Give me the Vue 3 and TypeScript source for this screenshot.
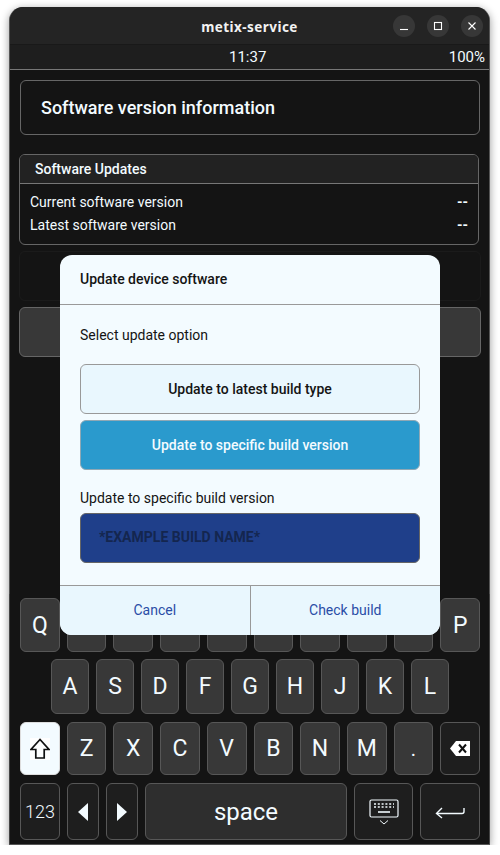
<script setup lang="ts">
const rowOne: string[] = ['Q', 'W', 'E', 'R', 'T', 'Y', 'U', 'I', 'O', 'P']
const rowTwo: string[] = ['A', 'S', 'D', 'F', 'G', 'H', 'J', 'K', 'L']
const rowThree: string[] = ['Z', 'X', 'C', 'V', 'B', 'N', 'M', '.']
</script>

<template>
  <div class="window">
    <header class="titlebar">
      <span class="title">metix-service</span>
      <div class="controls">
        <button class="ctl" aria-label="Minimise">
          <svg width="10" height="10" viewBox="0 0 10 10"><path d="M1 8.5h8" stroke="#fff" stroke-width="1.1" fill="none" /></svg>
        </button>
        <button class="ctl" aria-label="Maximise">
          <svg width="10" height="10" viewBox="0 0 10 10"><rect x="1.5" y="1.5" width="7" height="7" stroke="#fff" stroke-width="1.1" fill="none" /></svg>
        </button>
        <button class="ctl" aria-label="Close">
          <svg width="10" height="10" viewBox="0 0 10 10"><path d="M1.5 1.5l7 7M8.5 1.5l-7 7" stroke="#fff" stroke-width="1.1" fill="none" /></svg>
        </button>
      </div>
    </header>

    <div class="screen">
      <div class="status">
        <span class="time">11:37</span>
        <span class="battery">100%</span>
      </div>

      <main class="content">
        <section class="head-card">Software version information</section>
        <section class="update-card">
          <h2 class="update-title">Software Updates</h2>
          <div class="update-body">
            <div class="line"><span>Current software version</span><b>--</b></div>
            <div class="line"><span>Latest software version</span><b>--</b></div>
          </div>
        </section>
        <div class="ghost-card"></div>
        <div class="dark-button"></div>
      </main>

      <div class="keyboard">
        <div class="kb-row">
          <span v-for="k in rowOne" :key="k" class="key wide">{{ k }}</span>
        </div>
        <div class="kb-row centered">
          <span v-for="k in rowTwo" :key="k" class="key mid">{{ k }}</span>
        </div>
        <div class="kb-row third">
          <span class="key wide shift">
            <svg width="20" height="22" viewBox="0 0 20 22">
              <rect width="20" height="22" fill="#fff" />
              <path d="M10 1.5L1 11.5h4.8V20h8.4v-8.5H19z" fill="#fff" stroke="#111" stroke-width="1.7" stroke-linejoin="miter" />
            </svg>
          </span>
          <span v-for="k in rowThree" :key="k" class="key wide" :class="{ dot: k === '.' }">{{ k }}</span>
          <span class="key wide fn">
            <svg width="20" height="15" viewBox="0 0 20 15">
              <path d="M0 7.5L6 0h14v15H6z" fill="#fff" />
              <path d="M9 3.5l7 8M16 3.5l-7 8" stroke="#111" stroke-width="2" fill="none" />
            </svg>
          </span>
        </div>
        <div class="kb-row bottom">
          <span class="key fn num">123</span>
          <span class="key fn arrow">
            <svg width="10" height="18" viewBox="0 0 10 18"><path d="M10 0v18L0 9z" fill="#f3fbff" /></svg>
          </span>
          <span class="key fn arrow">
            <svg width="10" height="18" viewBox="0 0 10 18"><path d="M0 0v18l10-9z" fill="#f3fbff" /></svg>
          </span>
          <span class="key space">space</span>
          <span class="key fn hide">
            <svg width="30" height="26" viewBox="0 0 30 26" fill="none" stroke="#f3fbff">
              <rect x="1" y="1" width="28" height="17" rx="1.5" stroke-width="1.2" />
              <path d="M5 5h20M5 8h20" stroke-width="1.6" stroke-dasharray="2 1.8" />
              <path d="M9 13h12" stroke-width="1.6" />
              <path d="M11 21.5l4 3.5 4-3.5" stroke-width="1" />
            </svg>
          </span>
          <span class="key fn enter">
            <svg width="30" height="14" viewBox="0 0 30 14" fill="none" stroke="#f3fbff" stroke-width="1.4">
              <path d="M29 3v3.5a2 2 0 0 1-2 2H2" />
              <path d="M7 3L1.5 8.5 7 13" />
            </svg>
          </span>
        </div>
      </div>

      <div class="overlay">
        <section class="modal">
          <h3 class="modal-title">Update device software</h3>
          <div class="modal-body">
            <p class="select-label">Select update option</p>
            <div class="option">Update to latest build type</div>
            <div class="option active">Update to specific build version</div>
            <label class="field-label">Update to specific build version</label>
            <div class="field">*EXAMPLE BUILD NAME*</div>
          </div>
          <footer class="modal-footer">
            <button class="foot-btn">Cancel</button>
            <button class="foot-btn">Check build</button>
          </footer>
        </section>
      </div>
    </div>
  </div>
</template>

<style>
html, body { background: #fff; }
</style>

<style scoped>
* { box-sizing: border-box; }
.window {
  width: 481px;
  height: 838px;
  margin: 7px 0 0 9px;
  display: flex;
  flex-direction: column;
  background: #141414;
  border: 1px solid #555;
  border-top: 0;
  border-radius: 14px 14px 0 0;
  box-shadow: 0 2px 9px rgba(0, 0, 0, 0.4);
  font-family: Roboto, "Liberation Sans", sans-serif;
  color: #f3fbff;
}
.titlebar {
  flex: 0 0 38px;
  display: flex;
  align-items: center;
  justify-content: center;
  position: relative;
  padding-top: 2px;
  background: #242424;
  border-bottom: 1px solid #191919;
  border-radius: 14px 14px 0 0;
}
.title {
  font-family: "Noto Sans", "DejaVu Sans", sans-serif;
  font-size: 13.5px;
  font-weight: 700;
  letter-spacing: 0.45px;
  color: #f2f2f2;
}
.controls {
  position: absolute;
  right: 6px;
  top: 8px;
  display: flex;
  gap: 12px;
}
.ctl {
  width: 22px;
  height: 22px;
  padding: 0;
  border: 0;
  border-radius: 50%;
  background: #373737;
  display: flex;
  align-items: center;
  justify-content: center;
}
.screen {
  flex: 1;
  min-height: 0;
  position: relative;
  display: flex;
  flex-direction: column;
}
.status {
  flex: 0 0 25px;
  display: flex;
  align-items: center;
  justify-content: flex-end;
  position: relative;
  padding-right: 4px;
  background: #1e1e1e;
  border-bottom: 1px solid #777;
  font-size: 15px;
  font-weight: 400;
}
.time {
  position: absolute;
  left: 219px;
}
.content {
  flex: 1;
  min-height: 0;
  padding: 10px 9px 0;
  display: flex;
  flex-direction: column;
  background: #141414;
}
.head-card {
  height: 55px;
  margin: 0 0 19px 1px;
  width: 460px;
  padding-left: 20px;
  display: flex;
  align-items: center;
  border: 1px solid #666;
  border-radius: 6px;
  font-size: 18px;
  font-weight: 500;
}
.update-card {
  width: 460px;
  height: 91px;
  border: 1px solid #666;
  border-radius: 6px;
  overflow: hidden;
}
.update-title {
  margin: 0;
  height: 29px;
  padding-left: 15px;
  display: flex;
  align-items: center;
  background: #222;
  border-bottom: 1px solid #777;
  font-size: 14px;
  font-weight: 500;
}
.update-body {
  padding: 6px 10px 0 10px;
  font-size: 14px;
  font-weight: 400;
}
.line {
  height: 23px;
  display: flex;
  align-items: center;
  justify-content: space-between;
}
.line b {
  font-weight: 700;
}
.ghost-card {
  width: 462px;
  height: 50px;
  margin-top: 6px;
  border: 1px solid #1b1b1b;
  border-radius: 6px;
}
.dark-button {
  width: 462px;
  height: 50px;
  margin-top: 6px;
  background: #383838;
  border: 1px solid #666;
  border-radius: 6px;
}
.keyboard {
  flex: 0 0 auto;
  height: 250px;
  margin-top: -1px;
  padding: 4px 9px 0 10px;
  display: flex;
  flex-direction: column;
  gap: 7px;
  background: #141414;
  border-left: 1px solid #444;
  border-right: 1px solid #444;
  margin-left: -1px;
  margin-right: -1px;
}
.kb-row {
  display: flex;
  gap: 7px;
  height: 54px;
  flex: 0 0 auto;
}
.centered {
  justify-content: center;
  height: 55px;
}
.third { height: 53px; margin-top: 1px; }
.bottom { height: 57px; margin-top: 1px; }
.key {
  display: flex;
  align-items: center;
  justify-content: center;
  background: #383838;
  border: 1px solid #575757;
  border-radius: 6px;
  font-size: 23px;
  font-weight: 400;
  color: #f3fbff;
}
.wide { flex: 1 1 0; min-width: 0; }
.mid { width: 38px; }
.dot { font-size: 20px; }
.fn { background: #1e1e1e; }
.shift { background: #f3fbff; border-color: #ddd; }
.num { width: 40px; font-size: 18px; font-weight: 300; }
.arrow { width: 32px; }
.space { width: 202px; background: #2e2e2e; font-size: 24px; }
.hide { width: 59px; }
.enter { width: 60px; }
.overlay {
  position: absolute;
  inset: 0;
  display: flex;
  align-items: center;
  justify-content: center;
}
.modal {
  width: 380px;
  height: 380px;
  margin-left: 1px;
  display: flex;
  flex-direction: column;
  background: #f3fbff;
  border-radius: 12px;
  overflow: hidden;
  color: #141414;
}
.modal-title {
  margin: 0;
  height: 50px;
  padding-left: 20px;
  display: flex;
  align-items: center;
  border-bottom: 1px solid #999;
  font-size: 14px;
  font-weight: 500;
}
.modal-body {
  flex: 1;
  padding: 0 20px;
  display: flex;
  flex-direction: column;
}
.select-label {
  margin: 21px 0 20px;
  line-height: 18px;
  font-size: 14px;
}
.option {
  height: 50px;
  margin-bottom: 6px;
  display: flex;
  align-items: center;
  justify-content: center;
  background: #e9f7fe;
  border: 1px solid #999;
  border-radius: 6px;
  font-size: 14px;
  font-weight: 500;
}
.active {
  background: #2a9acd;
  border-color: #8fa8b5;
  color: #f3fbff;
}
.field-label {
  margin-top: 13px;
  line-height: 18px;
  font-size: 14px;
}
.field {
  height: 50px;
  margin-top: 6px;
  padding: 0 0 2px 18px;
  display: flex;
  align-items: center;
  background: #1f3f8a;
  border: 1px solid #666;
  border-radius: 6px;
  font-size: 14px;
  font-weight: 700;
  color: #14264f;
}
.modal-footer {
  height: 50px;
  display: flex;
  background: #e9f7fe;
  border-top: 1px solid #999;
}
.foot-btn {
  flex: 1;
  padding: 0;
  border: 0;
  background: transparent;
  font-family: inherit;
  font-size: 14px;
  color: #2a4da6;
}
.foot-btn + .foot-btn {
  border-left: 1px solid #999;
}
</style>
